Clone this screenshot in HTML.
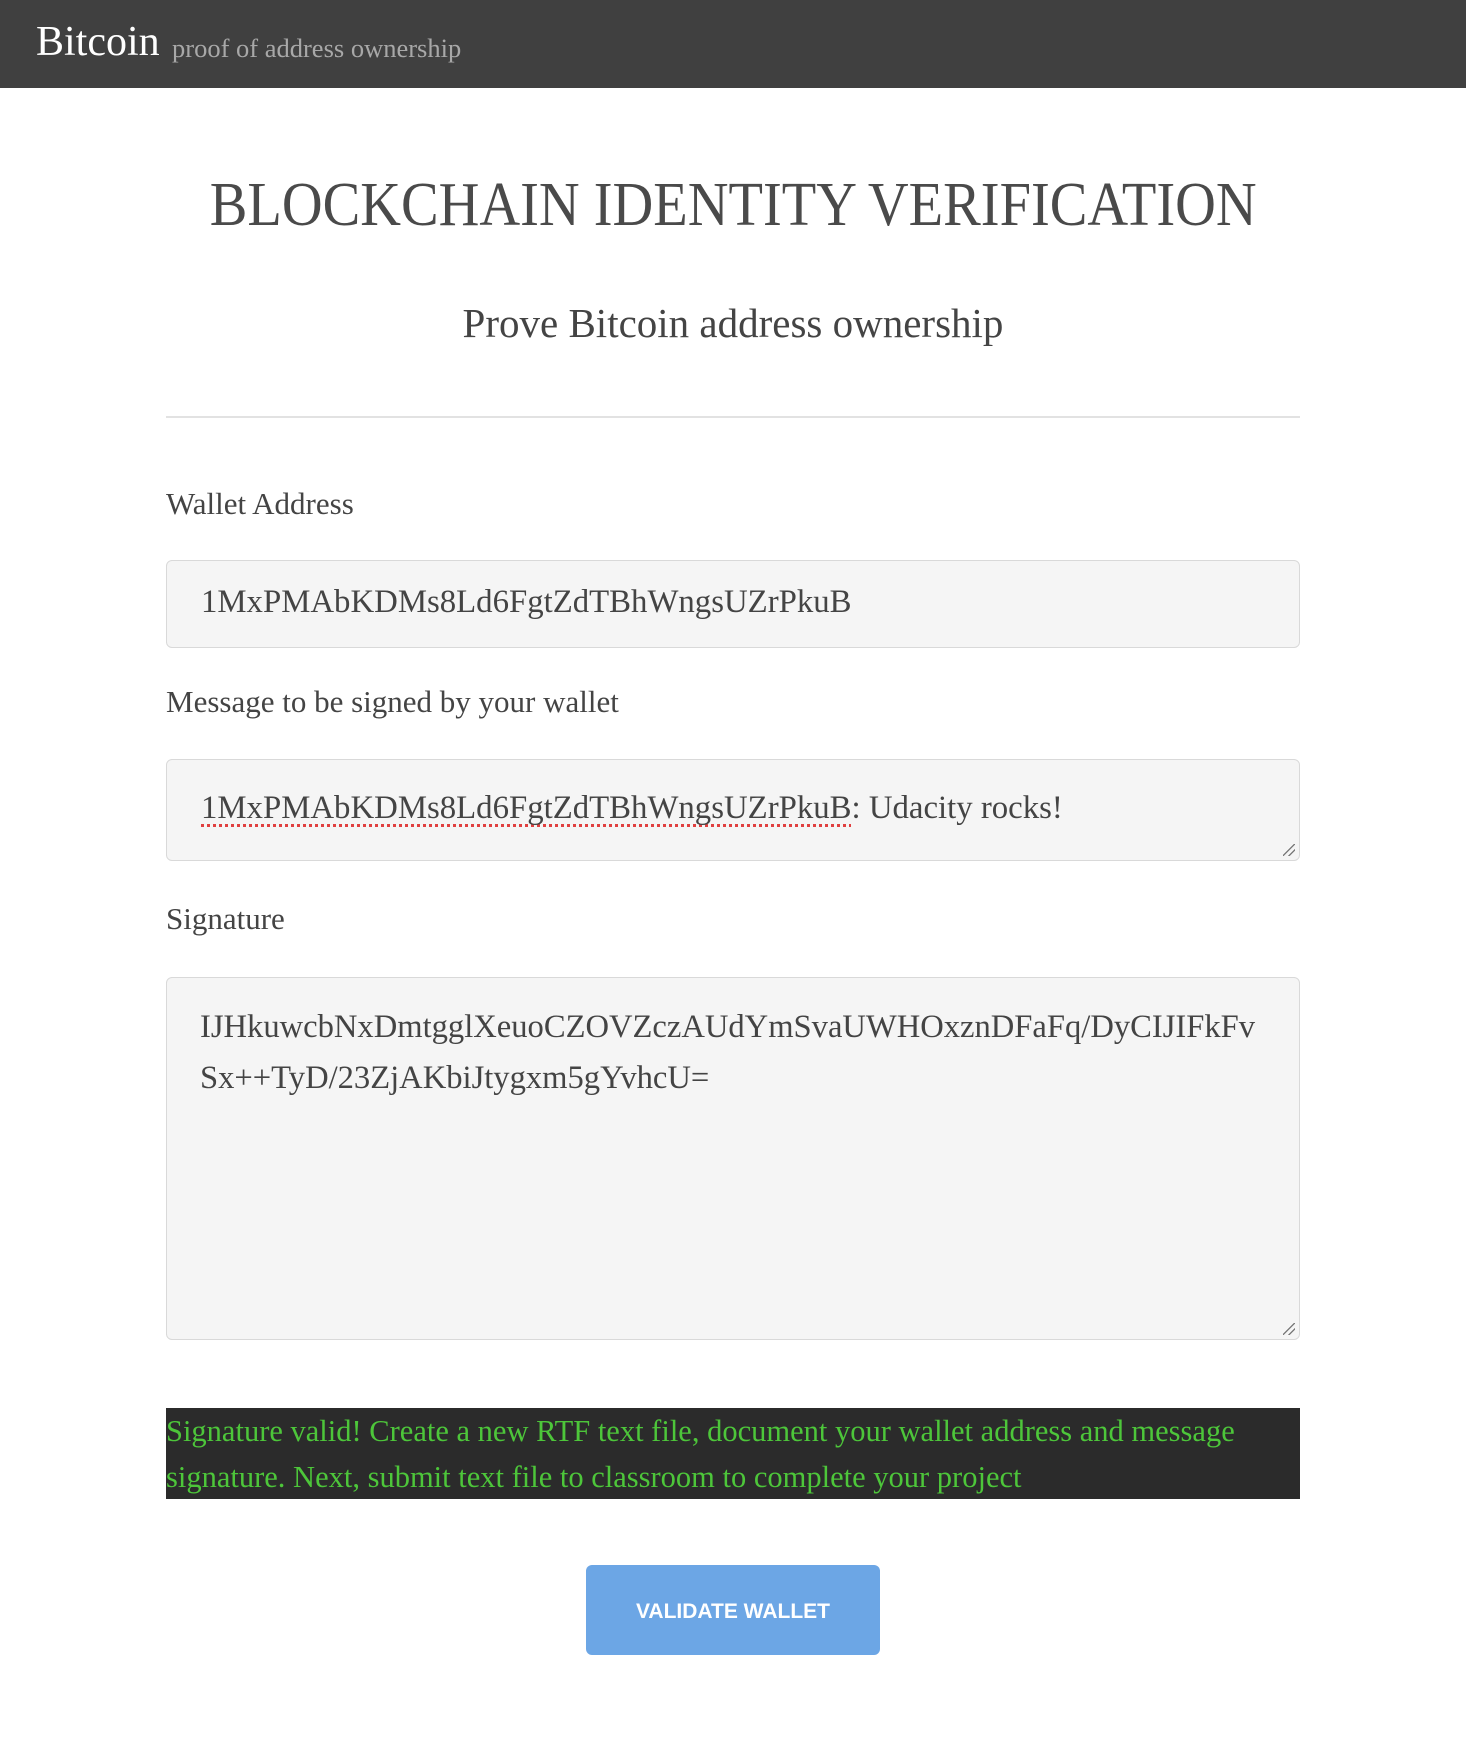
<!DOCTYPE html>
<html><head><meta charset="utf-8"><style>
body{margin:0;width:1466px;height:1740px;background:#fff;font-family:"Liberation Serif",serif;color:#444;position:relative;overflow:hidden}
.hdr{position:absolute;left:0;top:0;width:1466px;height:88px;background:#404040}
.abs{position:absolute;white-space:nowrap}
.box{position:absolute;left:166px;width:1134px;background:#f5f5f5;border:1px solid #d9d9d9;border-radius:6px;box-sizing:border-box}
.lbl{font-size:31px;color:#444}
.tx{font-size:32.8px;color:#444}
.grip{position:absolute;right:4px;bottom:4px;width:12px;height:12px;background:linear-gradient(135deg,transparent 45%,#777 46%,#777 52%,transparent 53%,transparent 70%,#777 71%,#777 77%,transparent 78%)}
</style></head><body>
<div class="hdr"></div>
<div class="abs" style="left:36px;top:18px;font-size:42px;color:#fff">Bitcoin</div>
<div class="abs" style="left:172px;top:33px;font-size:26.5px;color:#a8a8a8">proof of address ownership</div>
<div class="abs" style="left:0;width:1466px;top:170px;text-align:center;font-size:62px;color:#4a4a4a"><span style="display:inline-block;transform:scaleX(0.91)">BLOCKCHAIN IDENTITY VERIFICATION</span></div>
<div class="abs" style="left:0;width:1466px;top:299px;text-align:center;font-size:41px;color:#444">Prove Bitcoin address ownership</div>
<div style="position:absolute;left:166px;top:416px;width:1134px;height:2px;background:#e2e2e2"></div>
<div class="abs lbl" style="left:166px;top:486px">Wallet Address</div>
<div class="box" style="top:560px;height:88px"></div>
<div class="abs tx" style="left:201px;top:584px">1MxPMAbKDMs8Ld6FgtZdTBhWngsUZrPkuB</div>
<div class="abs lbl" style="left:166px;top:684px">Message to be signed by your wallet</div>
<div class="box" style="top:759px;height:102px"><div class="grip"></div></div>
<div class="abs tx" style="left:201px;top:790px"><span style="text-decoration:underline dotted #e04040;text-decoration-thickness:3px;text-underline-offset:6px;text-decoration-skip-ink:none">1MxPMAbKDMs8Ld6FgtZdTBhWngsUZrPkuB</span>: Udacity rocks!</div>
<div class="abs lbl" style="left:166px;top:901px">Signature</div>
<div class="box" style="top:977px;height:363px"><div class="grip"></div></div>
<div class="abs tx" style="left:200px;top:1002px;line-height:51px;font-size:32.6px">IJHkuwcbNxDmtgglXeuoCZOVZczAUdYmSvaUWHOxznDFaFq/DyCIJIFkFv<br>Sx++TyD/23ZjAKbiJtygxm5gYvhcU=</div>
<div style="position:absolute;left:166px;top:1408px;width:1134px;height:91px;background:#2b2b2b"></div>
<div class="abs" style="left:166px;top:1408px;font-size:30.5px;line-height:46px;color:#4dc63a">Signature valid! Create a new RTF text file, document your wallet address and message<br>signature. Next, submit text file to classroom to complete your project</div>
<div style="position:absolute;left:586px;top:1565px;width:294px;height:90px;background:#6ca6e5;border-radius:6px;color:#fff;font-family:'Liberation Sans',sans-serif;font-size:21px;font-weight:bold;text-align:center;line-height:94px">VALIDATE WALLET</div>
</body></html>
